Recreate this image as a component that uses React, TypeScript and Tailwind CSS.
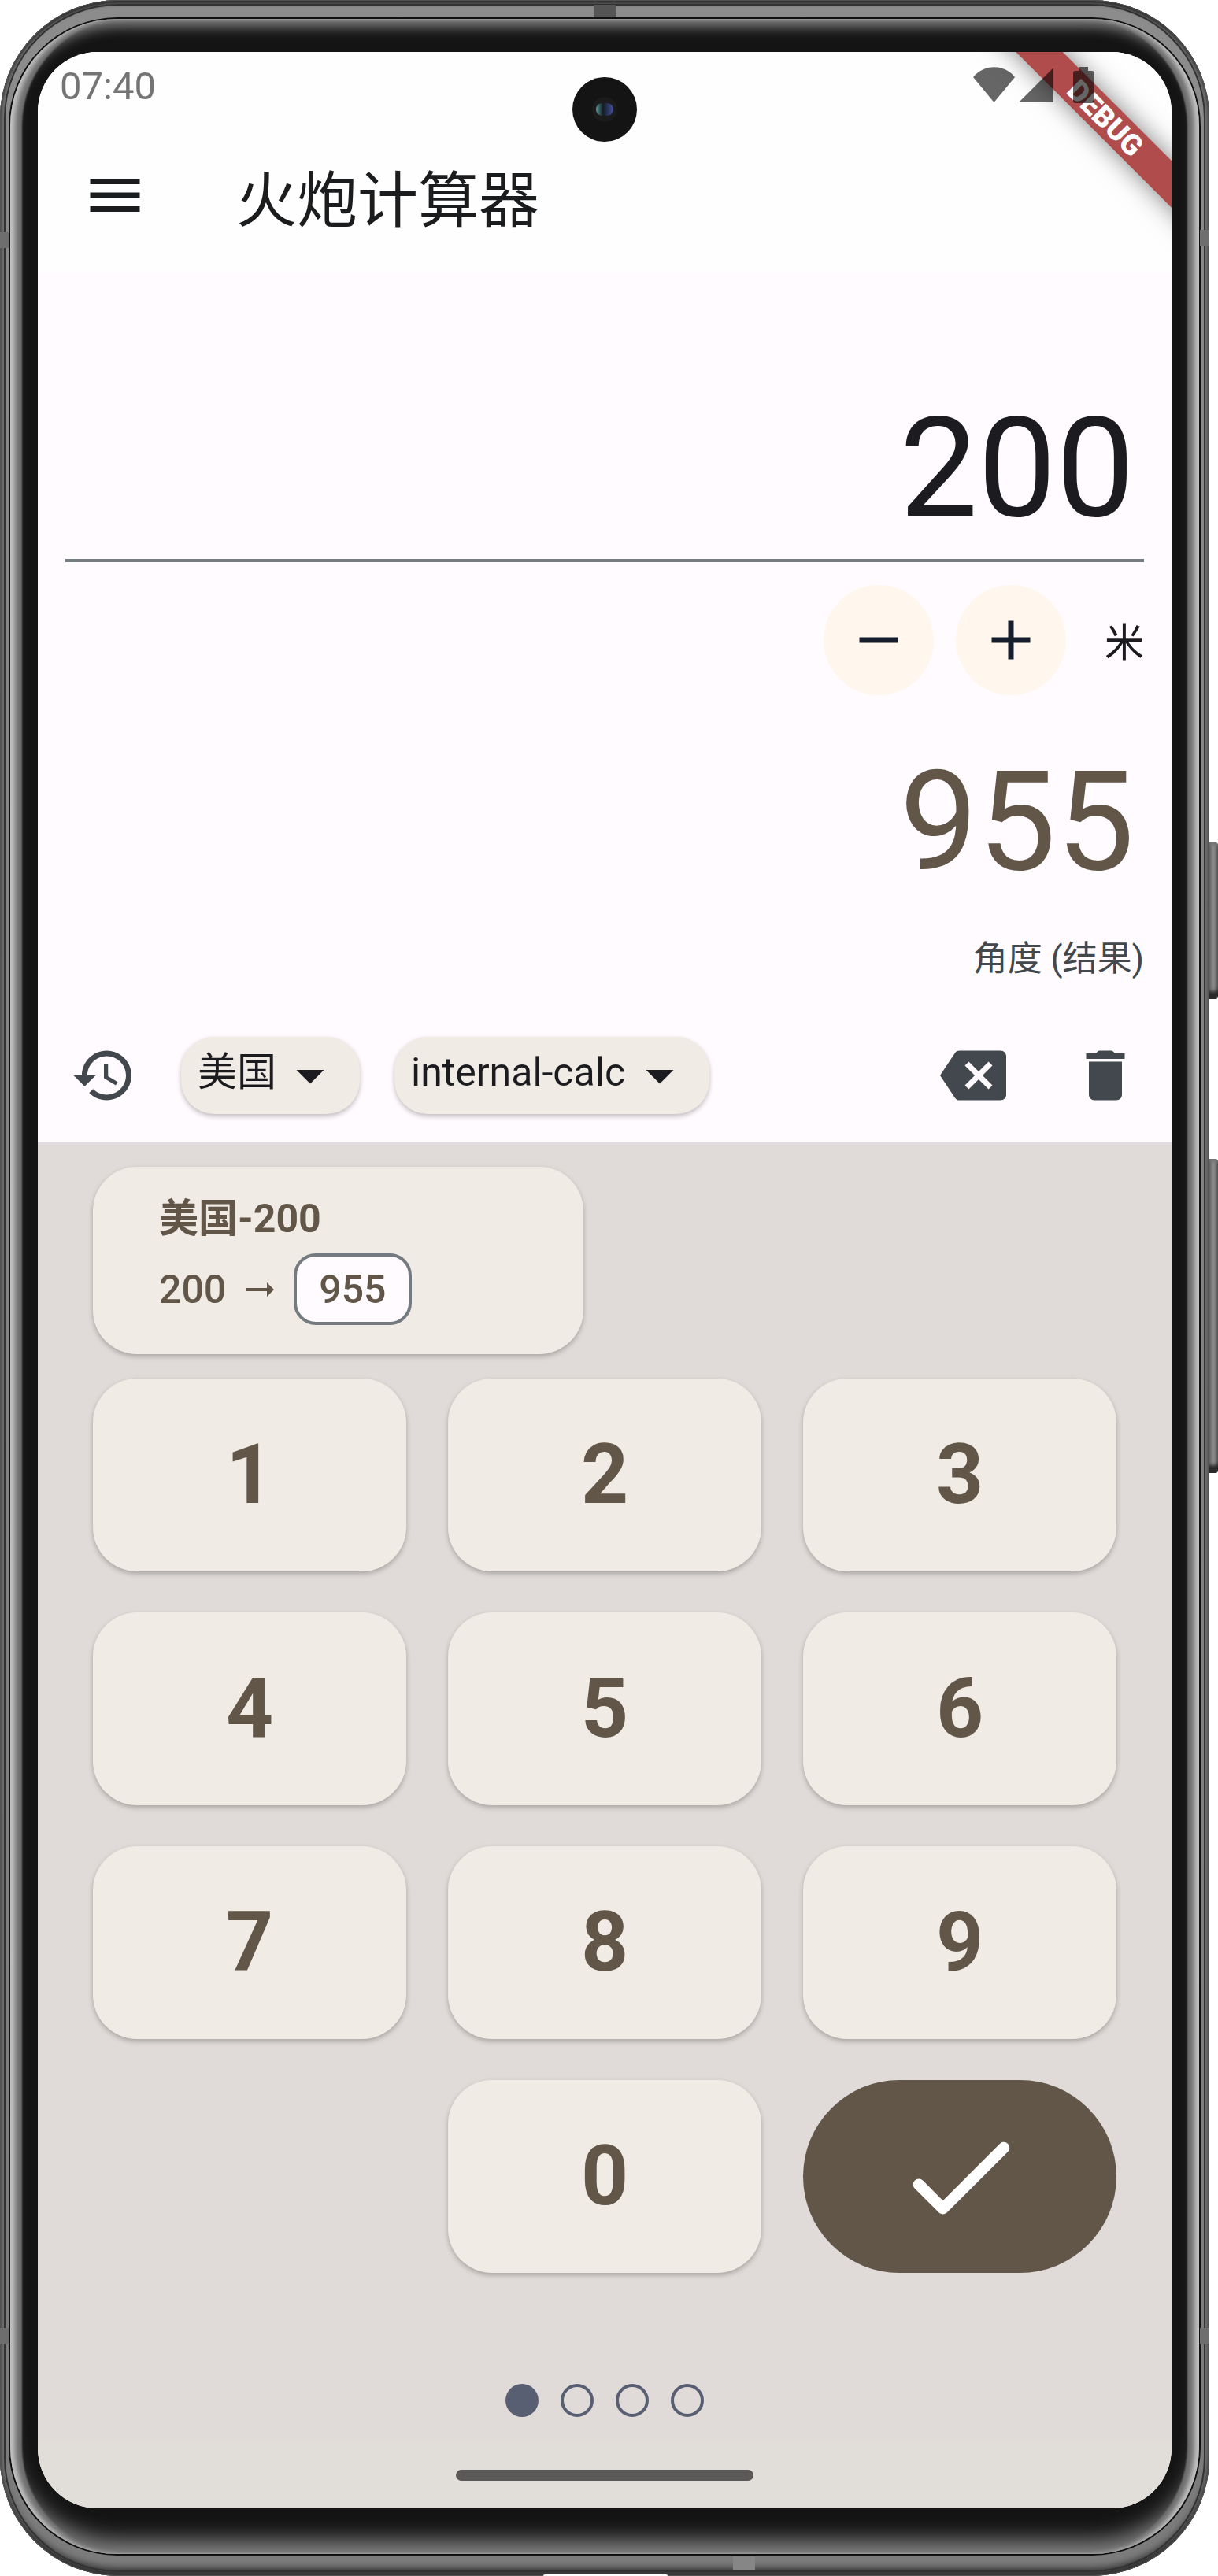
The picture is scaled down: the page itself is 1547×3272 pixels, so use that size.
import { useState } from "react";

const FONT = "font-[Roboto,'Noto_Sans_CJK_SC',sans-serif]";

function Glyph({ d, className = "size-[84px]" }: { d: string; className?: string }) {
  return (
    <svg viewBox="0 0 24 24" className={className} fill="currentColor" aria-hidden="true">
      <path d={d} />
    </svg>
  );
}

const icons = {
  menu: "M3 18h18v-2H3v2zm0-5h18v-2H3v2zm0-7v2h18V6H3z",
  minus: "M19 13H5v-2h14v2z",
  plus: "M19 13h-6v6h-2v-6H5v-2h6V5h2v6h6v2z",
  history:
    "M13 3c-4.97 0-9 4.03-9 9H1l3.89 3.89.07.14L9 12H6c0-3.87 3.13-7 7-7s7 3.13 7 7-3.13 7-7 7c-1.93 0-3.68-.79-4.94-2.06l-1.42 1.42C8.27 19.99 10.51 21 13 21c4.97 0 9-4.03 9-9s-4.03-9-9-9zm-1 5v5l4.28 2.54.72-1.21-3.5-2.08V8H12z",
  backspace:
    "M22 3H7c-.69 0-1.23.35-1.59.88L0 12l5.41 8.11c.36.53.9.89 1.59.89h15c1.1 0 2-.9 2-2V5c0-1.1-.9-2-2-2zm-3 12.59L17.59 17 14 13.41 10.41 17 9 15.59 12.59 12 9 8.41 10.41 7 14 10.59 17.59 7 19 8.41 15.41 12 19 15.59z",
  trash:
    "M6 19c0 1.1.9 2 2 2h8c1.1 0 2-.9 2-2V7H6v12zM18 4h-2.500l-.71-.71c-.18-.18-.44-.29-.7-.29H9.910c-.26 0-.52.11-.7.29L8.500 4H5v2h14V4z",
  drop: "M7 10l5 5 5-5z",
};

function StatusBar() {
  return (
    <div className="flex h-[84px] items-center justify-between pl-7 pr-[98px] text-[49px] leading-[84px] text-[#747474]">
      <span className="pt-1">07:40</span>
      <div className="relative z-20 flex items-center text-black/60">
        <svg viewBox="0 0 53 46" className="h-[46px] w-[53px]" fill="currentColor" aria-hidden="true">
          <path d="M0 13C14-4 39-4 53 13L26.500 45z" />
        </svg>
        <svg viewBox="0 0 44 44" className="ml-[5px] size-11" fill="currentColor" aria-hidden="true">
          <path d="M44 0v44H0z" />
        </svg>
        <svg viewBox="0 0 27 46" className="ml-[25px] h-[46px] w-[27px]" fill="currentColor" aria-hidden="true">
          <path d="M8 0h11v5h5a3 3 0 0 1 3 3v35a3 3 0 0 1-3 3H3a3 3 0 0 1-3-3V8a3 3 0 0 1 3-3h5z" />
        </svg>
      </div>
    </div>
  );
}

function DebugBanner() {
  return (
    <div className="pointer-events-none absolute right-0 top-0 z-10 size-[360px] overflow-hidden">
      <div className="absolute -right-[136px] top-[63px] flex h-[42px] w-[440px] rotate-45 items-center justify-center bg-[#b04c4c] text-[37px] font-black leading-none text-white shadow-[0_0_32px_rgba(0,0,0,0.5)]">
        DEBUG
      </div>
    </div>
  );
}

function Camera() {
  return (
    <div className="absolute left-1/2 top-8 z-20 flex size-[82px] -translate-x-1/2 items-center justify-center rounded-full bg-[#141414]">
      <div className="flex size-8 items-center justify-center rounded-full bg-[#1b1b1c]">
        <div className="h-4 w-[22px] rounded-full bg-linear-to-r from-[#5fa3a5] via-[#141c22] via-40% to-[#4550a0]" />
      </div>
    </div>
  );
}

function ChipSelect({ label, value }: { label: string; value: string }) {
  return (
    <div className="relative flex h-[98px] items-center rounded-[42px] bg-[#f0ebe4] text-[#1c1b1f] shadow-[0_3px_6px_rgba(0,0,0,0.25)]">
      <select
        aria-label={label}
        defaultValue={value}
        className="h-full appearance-none rounded-[42px] bg-transparent pb-2 pl-[21px] pr-[106px] text-[50px]"
      >
        <option>{value}</option>
      </select>
      <Glyph d={icons.drop} className="pointer-events-none absolute right-[21px] size-[84px]" />
    </div>
  );
}

function SideButton({ className }: { className: string }) {
  return (
    <div
      className={`absolute right-0 w-[11px] rounded-r-[4px] bg-linear-to-r from-[#6a6a6a] via-[#8a8a8a] to-[#5a5a5a] shadow-[inset_0_-12px_4px_-2px_#2a2a2a,inset_0_6px_3px_-2px_#777] ${className}`}
    />
  );
}

const keyClass =
  "h-[245px] rounded-[56px] bg-[#f0ebe4] text-[105px] font-bold text-[#625648] shadow-[0_3px_6px_rgba(0,0,0,0.25)]";

export default function App() {
  const [distance, setDistance] = useState("200");

  return (
    <div className={`relative min-h-screen w-full bg-white pr-[11px] ${FONT}`}>
      <SideButton className="top-[1070px] h-[199px]" />
      <SideButton className="top-[1472px] h-[399px]" />
      <div className="relative rounded-[150px] bg-linear-to-b from-[#8c8c8c] to-[#7c7c7c] pb-[28px] pl-[13px] pr-[13px] pt-[24px] shadow-[inset_0_0_1px_1px_#555,inset_0_5px_4px_#303030,inset_0_-12px_10px_-2px_#333,inset_0_0_0_5px_#747474,inset_0_0_0_7px_#333]">
        <div className="absolute left-1/2 top-[6px] h-4 w-7 -translate-x-1/2 bg-[#555]" />
        <div className="absolute bottom-2 left-[931px] h-[18px] w-7 bg-[#868686]" />
        <div className="absolute bottom-0 left-[690px] h-[2px] w-[158px] rounded-t bg-white" />
        <div className="absolute left-0 top-[295px] h-5 w-[12px] bg-[#6e6e6e]" />
        <div className="absolute right-0 top-[292px] h-5 w-[12px] bg-[#6e6e6e]" />
        <div className="absolute bottom-[295px] left-0 h-5 w-[12px] bg-[#6e6e6e]" />
        <div className="absolute bottom-[295px] right-0 h-5 w-[12px] bg-[#6e6e6e]" />
        <div className="rounded-[136px] bg-[#141414] pb-[58px] pl-[35px] pr-[35px] pt-[42px] shadow-[0_0_0_2px_#101010,inset_8px_0_6px_-2px_#c4c4c4,inset_-8px_0_6px_-2px_#c4c4c4,inset_16px_0_2px_-1px_#6e6e6e,inset_-16px_0_2px_-1px_#6e6e6e,inset_0_12px_16px_-2px_#808080,inset_0_-22px_26px_-4px_#808080]">
          <main className="relative flex flex-col overflow-hidden rounded-[76px] bg-[#fffbff]">
            <DebugBanner />
            <Camera />
            <header className="bg-[#fefefe]">
              <StatusBar />
              <div className="flex h-[196px] items-center pl-14 text-[#1b1c1e]">
                <button type="button" aria-label="Menu">
                  <Glyph d={icons.menu} />
                </button>
                <h1 className="ml-[112px] pt-4 text-[77px] leading-none">火炮计算器</h1>
              </div>
            </header>

            <section className="px-[35px] pt-[136px]">
              <input
                aria-label="米"
                value={distance}
                onChange={(e) => setDistance(e.target.value)}
                className="block h-[232px] w-full border-b-4 border-[#757d80] bg-transparent pb-1 pr-3 text-right text-[177px] leading-none text-[#1c1b1f] outline-none"
              />
              <div className="flex items-center justify-end pt-[29px] text-[#161d2d]">
                <button
                  type="button"
                  aria-label="减"
                  onClick={() => setDistance(String(Number(distance) - 1))}
                  className="flex size-[140px] items-center justify-center rounded-full bg-[#fff7ed]"
                >
                  <Glyph d={icons.minus} />
                </button>
                <button
                  type="button"
                  aria-label="加"
                  onClick={() => setDistance(String(Number(distance) + 1))}
                  className="ml-7 flex size-[140px] items-center justify-center rounded-full bg-[#fff7ed]"
                >
                  <Glyph d={icons.plus} />
                </button>
                <span className="ml-[49px] pt-2 text-[50px] text-[#1c1b1f]">米</span>
              </div>
              <output className="mt-[69px] block pr-3 text-right text-[177px] leading-[184px] text-[#625648]">955</output>
              <p className="mt-[54px] text-right text-[44px] leading-[56px] text-[#42484c]">角度 (结果)</p>
            </section>

            <div className="mt-[71px] flex items-center pb-[35px] pl-[42px] pr-[42px] text-[#42484e]">
              <button type="button" aria-label="历史">
                <Glyph d={icons.history} />
              </button>
              <div className="ml-14 flex gap-11">
                <ChipSelect label="国家" value="美国" />
                <ChipSelect label="计算方式" value="internal-calc" />
              </div>
              <button type="button" aria-label="退格" className="ml-auto">
                <Glyph d={icons.backspace} />
              </button>
              <button type="button" aria-label="清除" className="ml-[84px]">
                <Glyph d={icons.trash} />
              </button>
            </div>

            <section className="border-t-4 border-[#e1dce0] bg-[#e0dbd8] px-[70px] pt-7">
              <article className="h-[238px] w-[623px] max-w-full rounded-[56px] bg-[#f0ebe4] pl-[84px] pt-[38px] text-[50px] text-[#625648] shadow-[0_3px_6px_rgba(0,0,0,0.25)]">
                <h2 className="font-bold leading-[56px]">美国-200</h2>
                <div className="mt-4 flex items-center font-medium leading-none">
                  <span>200</span>
                  <svg viewBox="0 0 38 18" className="mx-6 h-[18px] w-[38px]" fill="currentColor" aria-hidden="true">
                    <path d="M1 7h27V0l9 9-9 9v-7H1z" />
                  </svg>
                  <span className="rounded-[28px] border-4 border-[#747b80] bg-[#fffbff] px-7 pb-4 pt-[17px]">955</span>
                </div>
              </article>
              <div className="mt-[31px] grid grid-cols-3 gap-x-[53px] gap-y-[52px]">
                {["1", "2", "3", "4", "5", "6", "7", "8", "9", "0"].map((n) => (
                  <button
                    key={n}
                    type="button"
                    onClick={() => setDistance(distance + n)}
                    className={n === "0" ? `col-start-2 ${keyClass}` : keyClass}
                  >
                    {n}
                  </button>
                ))}
                <button
                  type="button"
                  aria-label="确定"
                  className="flex h-[245px] items-center justify-center rounded-full bg-[#625648] text-white"
                >
                  <svg viewBox="0 0 24 24" className="size-[175px]" fill="currentColor" aria-hidden="true">
                    <path d="M9 16.200l-3.500-3.500c-.39-.39-1.010-.39-1.400 0-.39.39-.39 1.010 0 1.400l4.190 4.190c.39.39 1.020.39 1.410 0L20.300 7.700c.39-.39.39-1.010 0-1.400-.39-.39-1.010-.39-1.400 0L9 16.200z" />
                  </svg>
                </button>
              </div>
              <div className="flex justify-center gap-7 pb-[31px] pt-[141px]">
                <span className="size-[42px] rounded-full bg-[#595f72]" />
                <span className="size-[42px] rounded-full border-4 border-[#595f72]" />
                <span className="size-[42px] rounded-full border-4 border-[#595f72]" />
                <span className="size-[42px] rounded-full border-4 border-[#595f72]" />
              </div>
            </section>
            <footer className="flex h-[85px] items-center justify-center bg-[#e1deda]">
              <span className="h-[14px] w-[378px] rounded-full bg-[#5a5957]" />
            </footer>
          </main>
        </div>
      </div>
    </div>
  );
}
